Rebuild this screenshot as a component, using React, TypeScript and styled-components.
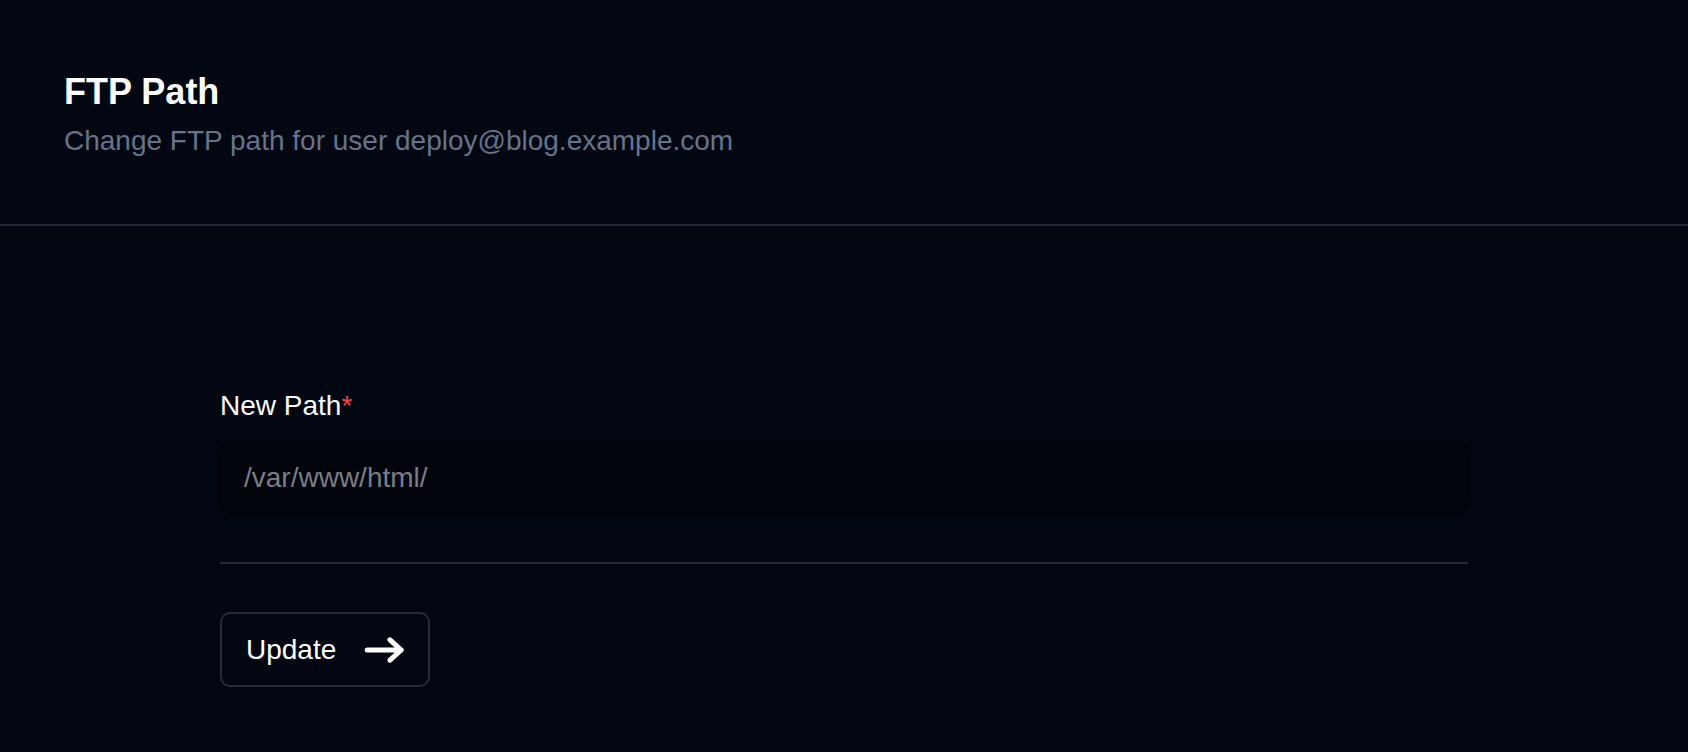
import React from "react";
import styled, { createGlobalStyle } from "styled-components";

const GlobalStyle = createGlobalStyle`
  html, body {
    margin: 0;
    padding: 0;
    background: #030712;
    min-height: 100%;
  }
  body {
    font-family: "Liberation Sans", Arial, sans-serif;
    color: #ffffff;
    -webkit-font-smoothing: antialiased;
  }
  * { box-sizing: border-box; }
`;

const Page = styled.div`
  min-height: 752px;
  background: #030712;
`;

const Header = styled.header`
  padding: 67px 64px 62px;
  border-bottom: 2px solid #1f2937;
`;

const Title = styled.h1`
  margin: 0;
  font-size: 36px;
  line-height: 49px;
  font-weight: 700;
  color: #ffffff;
`;

const Subtitle = styled.p`
  margin: 4px 0 0;
  font-size: 28px;
  line-height: 42px;
  color: #64748b;
`;

const Main = styled.main`
  padding-top: 159px;
`;

const Form = styled.form`
  width: 1248px;
  margin: 0 auto;
  display: flex;
  flex-direction: column;
`;

const Label = styled.label`
  font-size: 28px;
  line-height: 42px;
  color: #f9fafb;
`;

const Required = styled.span`
  color: #ef4444;
`;

const Input = styled.input`
  margin-top: 15px;
  height: 71px;
  width: 100%;
  padding: 0 24px;
  border: none;
  outline: none;
  border-radius: 14px;
  background: #02040c;
  box-shadow: 0 2px 8px rgba(0, 0, 0, 0.6), 0 0 0 2px rgba(0, 0, 0, 0.3);
  font-family: "Liberation Sans", Arial, sans-serif;
  font-size: 28px;
  color: #7a7e86;
  &::placeholder { color: #7a7e86; }
`;

const Separator = styled.div`
  margin-top: 49px;
  height: 2px;
  background: #1f2937;
`;

const Actions = styled.div`
  margin-top: 48px;
  display: flex;
`;

const Button = styled.button`
  display: inline-flex;
  align-items: center;
  gap: 26px;
  height: 75px;
  padding: 0 24px 0 24px;
  border: 2px solid #252d3b;
  border-radius: 10px;
  background: transparent;
  font-family: "Liberation Sans", Arial, sans-serif;
  font-size: 28px;
  line-height: 42px;
  color: #ffffff;
  cursor: pointer;
`;

const ArrowIcon = () => (
  <svg width="42" height="32" viewBox="0 0 42 32" fill="none">
    <path
      d="M5.2 16H39.2M28 5.8L39.2 16L28 26.2"
      stroke="#ffffff"
      strokeWidth="5"
      strokeLinecap="round"
      strokeLinejoin="round"
    />
  </svg>
);

export default function App() {
  return (
    <Page>
      <GlobalStyle />
      <Header>
        <Title>FTP Path</Title>
        <Subtitle>Change FTP path for user deploy@blog.example.com</Subtitle>
      </Header>
      <Main>
        <Form onSubmit={(e) => e.preventDefault()}>
          <Label htmlFor="new-path">
            New Path<Required>*</Required>
          </Label>
          <Input id="new-path" defaultValue="/var/www/html/" />
          <Separator />
          <Actions>
            <Button type="submit">
              Update
              <ArrowIcon />
            </Button>
          </Actions>
        </Form>
      </Main>
    </Page>
  );
}
